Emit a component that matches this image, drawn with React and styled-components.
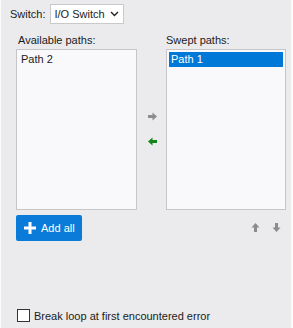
import React from 'react'
import styled, { createGlobalStyle } from 'styled-components'

const Global = createGlobalStyle`
  html, body {
    margin: 0;
    background: #fbfbfc;
  }
  body {
    font-family: "Liberation Sans", Arial, sans-serif;
    font-size: 11px;
    color: #1b1b1b;
  }
`

const Frame = styled.div`
  width: 290px;
  height: 328px;
  margin-left: 1px;
  background: #ebebed;
  display: flex;
  flex-direction: column;
  box-sizing: border-box;
`

const SwitchRow = styled.div`
  display: flex;
  align-items: center;
  gap: 5px;
  padding: 4px 0 0 9px;
  height: 20px;
`

const Select = styled.div`
  display: flex;
  align-items: center;
  gap: 5px;
  height: 20px;
  box-sizing: border-box;
  padding: 0 4px 0 3px;
  background: #fff;
  border: 1px solid #c9c9c9;
`

const Columns = styled.div`
  display: grid;
  grid-template-columns: 121px 29px 120px;
  margin: 10px 0 0 15px;
`

const Column = styled.div`
  display: flex;
  flex-direction: column;
`

const Label = styled.div`
  height: 15px;
  line-height: 13px;
  padding-left: ${p => p.$indent}px;
`

const ListBox = styled.div`
  height: 161px;
  box-sizing: border-box;
  background: #f9f9fb;
  border: 1px solid #c6c6c8;
  padding: 2px;
`

const Item = styled.div`
  height: 15px;
  line-height: 15px;
  padding-left: 2px;
  background: ${p => (p.$selected ? '#0078d7' : 'transparent')};
  color: ${p => (p.$selected ? '#fff' : '#1b1b1b')};
`

const Transfer = styled.div`
  display: flex;
  flex-direction: column;
  align-items: center;
  gap: 16px;
  padding: 78px 0 0 2px;
`

const Actions = styled.div`
  display: flex;
  justify-content: space-between;
  align-items: center;
  margin: 5px 0 0 15px;
  width: 265px;
`

const AddButton = styled.button`
  display: flex;
  align-items: center;
  gap: 5px;
  height: 26px;
  padding: 0 7px 0 8px;
  border: none;
  border-radius: 2px;
  background: #0a7bd8;
  color: #fff;
  font: inherit;
  font-size: 11px;
`

const Movers = styled.div`
  display: flex;
  gap: 12px;
  margin-top: -2px;
`

const CheckRow = styled.label`
  display: flex;
  align-items: center;
  gap: 4px;
  margin: auto 0 6px 16px;
`

const Box = styled.span`
  width: 13px;
  height: 13px;
  box-sizing: border-box;
  border: 1px solid #333;
  background: #fff;
`

const Arrow = ({ color, dir }) => {
  const rot = { right: 0, left: 180, up: -90, down: 90 }[dir]
  return (
    <svg width="9" height="9" viewBox="0 0 9 9">
      <path
        transform={`rotate(${rot} 4.5 4.5)`}
        d="M0 3H4.5V0.5L9 4.5L4.5 8.5V6H0Z"
        fill={color}
      />
    </svg>
  )
}

const Chevron = () => (
  <svg width="9" height="6" viewBox="0 0 9 6">
    <path d="M1 1L4.5 4.5L8 1" stroke="#222" strokeWidth="1.4" fill="none" />
  </svg>
)

const Plus = () => (
  <svg width="12" height="12" viewBox="0 0 12 12">
    <path d="M4.5 0H7.5V4.5H12V7.5H7.5V12H4.5V7.5H0V4.5H4.5Z" fill="#fff" />
  </svg>
)

export default function App() {
  return (
    <Frame>
      <Global />
      <SwitchRow>
        <span>Switch:</span>
        <Select>
          <span>I/O Switch</span>
          <Chevron />
        </Select>
      </SwitchRow>
      <Columns>
        <Column>
          <Label $indent={2}>Available paths:</Label>
          <ListBox>
            <Item>Path 2</Item>
          </ListBox>
        </Column>
        <Transfer>
          <Arrow dir="right" color="#8c8c8c" />
          <Arrow dir="left" color="#13861a" />
        </Transfer>
        <Column>
          <Label $indent={0}>Swept paths:</Label>
          <ListBox>
            <Item $selected>Path 1</Item>
          </ListBox>
        </Column>
      </Columns>
      <Actions>
        <AddButton>
          <Plus />
          <span>Add all</span>
        </AddButton>
        <Movers>
          <Arrow dir="up" color="#8c8c8c" />
          <Arrow dir="down" color="#8c8c8c" />
        </Movers>
      </Actions>
      <CheckRow>
        <Box />
        <span>Break loop at first encountered error</span>
      </CheckRow>
    </Frame>
  )
}
